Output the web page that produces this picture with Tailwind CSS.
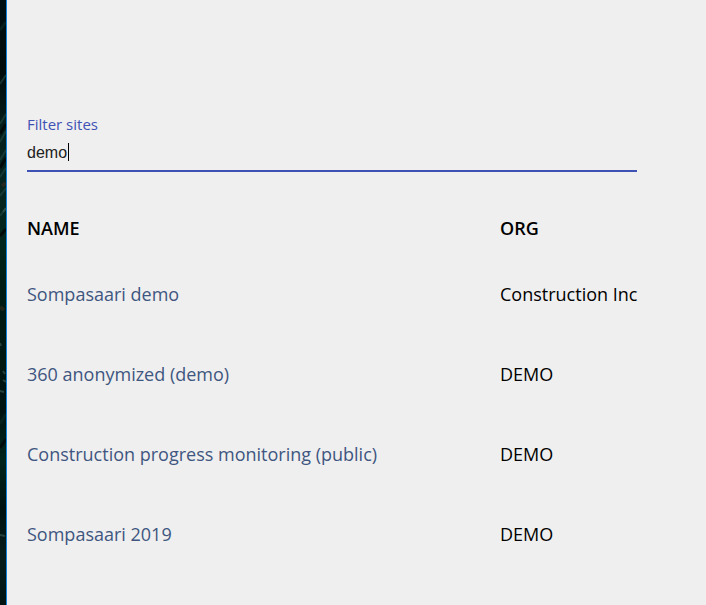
<!DOCTYPE html>
<html lang="en">
<head>
  <meta charset="utf-8" />
  <meta name="viewport" content="width=device-width, initial-scale=1" />
  <title>Sites</title>
  <script src="https://cdn.jsdelivr.net/npm/@tailwindcss/browser@4"></script>
</head>
<body class="flex min-h-screen bg-[#efefef] font-['Open_Sans',sans-serif] text-lg text-black">
  <!-- Background strip -->
  <div class="w-[7px] shrink-0 overflow-hidden border-r border-[#0f84da] bg-[#00130f]" aria-hidden="true">
    <svg class="block" width="6" height="605" viewBox="0 0 6 605" fill="none">
      <defs>
        <linearGradient id="leaves" x1="0" y1="0" x2="0" y2="1">
          <stop offset="0" stop-color="#000f12" />
          <stop offset=".12" stop-color="#000a0b" />
          <stop offset=".22" stop-color="#04201c" />
          <stop offset=".31" stop-color="#06251f" />
          <stop offset=".4" stop-color="#00241b" />
          <stop offset=".48" stop-color="#001c14" />
          <stop offset=".6" stop-color="#001712" />
          <stop offset=".68" stop-color="#001311" />
          <stop offset=".76" stop-color="#00241b" />
          <stop offset=".84" stop-color="#00120f" />
          <stop offset=".92" stop-color="#061c1c" />
          <stop offset="1" stop-color="#001512" />
        </linearGradient>
      </defs>
      <rect width="6" height="605" fill="url(#leaves)" />
      <path d="M0 84l6-9M0 124l6-10M0 142l6-11M0 160l6-10M0 177l6-9M0 196l6-8M0 216l6-8" stroke="#1c423d" stroke-width="2" opacity=".7" />
      <path d="M0 30l6-8M0 424l6-10" stroke="#0a2a25" stroke-width="3" opacity=".6" />
      <path d="M0 134l6-10M0 168l6-10M0 236l6-7M0 448l6-9" stroke="#000a09" stroke-width="3" />
      <path d="M2 186l4-3M0 307l4 3" stroke="#3a2c1e" stroke-width="4" opacity=".6" />
      <path d="M3 212l3-4M0 343l1 3M3 371l2 3M3 380l3 2M0 391l4 1M0 535l5 1" stroke="#34544f" stroke-width="2" opacity=".7" />
    </svg>
  </div>

  <!-- Main content -->
  <main class="min-w-0 flex-1 pl-5 pr-[69px] pt-28">
    <div class="border-b-2 border-[#3f51b5]">
      <label for="filter" class="block text-[15px] leading-6 text-[#3f51b5]">Filter sites</label>
      <div class="relative py-[5px]">
        <input id="filter" type="text" value="demo" class="block h-6 w-full bg-transparent font-['Liberation_Sans',sans-serif] text-base text-[#212121] caret-transparent outline-none" />
        <span class="absolute left-[41px] top-[7px] h-[18px] w-px bg-black" aria-hidden="true"></span>
      </div>
    </div>

    <table class="mt-[30px] w-full table-fixed text-left">
      <thead>
        <tr class="h-[52px]">
          <th class="p-0 font-semibold">NAME</th>
          <th class="w-[137px] p-0 font-semibold">ORG</th>
        </tr>
      </thead>
      <tbody>
        <tr class="h-20">
          <td class="p-0"><a href="#" class="text-[#3e5680]">Sompasaari demo</a></td>
          <td class="whitespace-nowrap p-0">Construction Inc</td>
        </tr>
        <tr class="h-20">
          <td class="p-0"><a href="#" class="text-[#3e5680]">360 anonymized (demo)</a></td>
          <td class="p-0">DEMO</td>
        </tr>
        <tr class="h-20">
          <td class="p-0"><a href="#" class="text-[#3e5680]">Construction progress monitoring (public)</a></td>
          <td class="p-0">DEMO</td>
        </tr>
        <tr class="h-20">
          <td class="p-0"><a href="#" class="text-[#3e5680]">Sompasaari 2019</a></td>
          <td class="p-0">DEMO</td>
        </tr>
      </tbody>
    </table>
  </main>
</body>
</html>
